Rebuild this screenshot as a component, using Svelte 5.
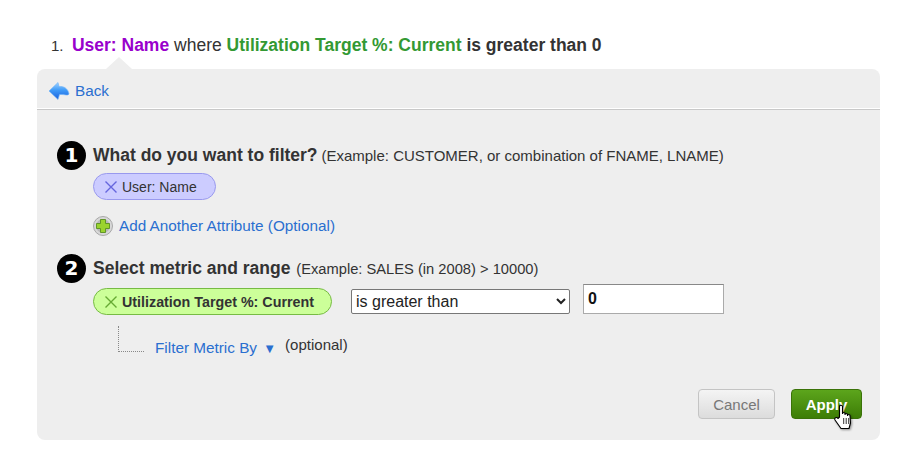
<script>
  const operators = ['is greater than', 'is less than', 'is equal to']
  let operator = operators[0]
  let threshold = '0'
</script>

<div class="page">
  <p class="rule">
    <span class="num">1.</span>
    <b class="attr">User: Name</b> where <b class="metric">Utilization Target %: Current</b> <b>is greater than 0</b>
  </p>

  <section class="panel">
    <span class="notch"></span>
    <div class="back">
      <svg class="back-icon" width="22" height="20" viewBox="0 0 22 20">
        <defs>
          <linearGradient id="arrow" x1="0" y1="0" x2="0" y2="1">
            <stop offset="0" stop-color="#9fd2ff" />
            <stop offset="0.45" stop-color="#3f9bf8" />
            <stop offset="1" stop-color="#1a5fdc" />
          </linearGradient>
        </defs>
        <path d="M1 10 L10 1.500 L11 5.500 C16 5 20 7.500 21 13 C20 15 17 13.500 14 13.500 L11.500 13.500 L10 18.500 Z" fill="url(#arrow)" stroke="#6db2f8" stroke-width="0.6" />
      </svg>
      <a href="#back">Back</a>
    </div>

    <div class="body">
      <div class="step first">
        <span class="badge">1</span>
        <div class="step-main">
          <h3>What do you want to filter? <small>(Example: CUSTOMER, or combination of FNAME, LNAME)</small></h3>
          <div class="pill attr-pill">
            <svg class="x" width="14" height="14" viewBox="0 0 14 14"><path d="M1.500 1.500 L12.500 12.500 M12.500 1.500 L1.500 12.500" /></svg>
            <span>User: Name</span>
          </div>
          <div class="add">
            <svg width="20" height="20" viewBox="0 0 20 20">
              <circle cx="10" cy="10" r="9.500" fill="#d8d8d8" stroke="#a8a8a8" />
              <circle cx="10" cy="10" r="7" fill="#b8b8b8" />
              <path d="M7.500 3.500 H12.500 V7.500 H16.500 V12.500 H12.500 V16.500 H7.500 V12.500 H3.500 V7.500 H7.500 Z" fill="#9ad32e" stroke="#4f8a14" stroke-width="0.8" />
            </svg>
            <a href="#add">Add Another Attribute (Optional)</a>
          </div>
        </div>
      </div>

      <div class="step second">
        <span class="badge">2</span>
        <div class="step-main">
          <h3>Select metric and range <small>(Example: SALES (in 2008) &gt; 10000)</small></h3>
          <div class="metric-row">
            <div class="pill metric-pill">
              <svg class="x" width="14" height="14" viewBox="0 0 14 14"><path d="M1.500 1.500 L12.500 12.500 M12.500 1.500 L1.500 12.500" /></svg>
              <span>Utilization Target %: Current</span>
            </div>
            <select bind:value={operator}>
              {#each operators as op}
                <option value={op}>{op}</option>
              {/each}
            </select>
            <input type="text" bind:value={threshold} />
          </div>
          <div class="filter-row">
            <span class="elbow"></span>
            <a href="#filter">Filter Metric By <span class="caret">▼</span></a>
            <span class="optional">(optional)</span>
          </div>
        </div>
      </div>

      <div class="actions">
        <button class="cancel">Cancel</button>
        <button class="apply">Apply</button>
        <svg class="cursor" width="19" height="26" viewBox="0 0 19 26">
          <path d="M5.500 13 L5.500 2.500 C5.500 0.800 8.500 0.800 8.500 2.500 L8.500 9.500 C8.500 8.200 11 8.200 11 9.500 L11 10.500 C11 9.200 13.500 9.200 13.500 10.500 L13.500 11.500 C13.500 10.200 16 10.200 16 11.500 L16.500 19 L15 24.500 L7 24.500 L1 16 C0 14 2.500 12.500 4 14.500 Z" fill="#fff" stroke="#000" stroke-width="1.100" stroke-linejoin="round" />
          <path d="M9.700 14 V20 M12.200 14 V20 M14.700 14 V20" stroke="#000" stroke-width="0.8" />
        </svg>
      </div>
    </div>
  </section>
</div>

<style>
  :global(body) {
    margin: 0;
    background: #fff;
  }
  .page {
    width: 918px;
    height: 473px;
    padding: 36px 38px 0 37px;
    box-sizing: border-box;
    font-family: "Liberation Sans", Arial, sans-serif;
    color: #333;
  }
  .rule {
    margin: 0 0 14px 14px;
    font-size: 17.500px;
    line-height: 19px;
  }
  .num {
    font-size: 15px;
    margin-right: 3.500px;
  }
  .attr {
    color: #9900cc;
  }
  .metric {
    color: #339933;
  }
  .panel {
    position: relative;
    height: 371px;
    background: #eee;
    border-radius: 8px;
  }
  .notch {
    position: absolute;
    left: 69px;
    top: -12px;
    border-left: 13px solid transparent;
    border-right: 13px solid transparent;
    border-bottom: 12px solid #eee;
  }
  a {
    color: #2a6fd0;
    text-decoration: none;
  }
  .back {
    height: 36px;
    display: flex;
    align-items: center;
    padding: 4px 0 0 11px;
    gap: 5px;
    border-bottom: 1px solid #c8c8c8;
    box-shadow: inset 0 -1px 0 #fff;
    font-size: 15.300px;
  }
  .body {
    padding: 0 18px 0 20px;
  }
  .step {
    display: flex;
    gap: 7px;
  }
  .first {
    padding-top: 31px;
  }
  .second {
    padding-top: 18px;
  }
  .badge {
    flex: none;
    width: 29px;
    height: 29px;
    border-radius: 50%;
    background: #000;
    color: #fff;
    font-family: "DejaVu Sans", sans-serif;
    font-size: 20px;
    font-weight: bold;
    line-height: 29px;
    text-align: center;
  }
  h3 {
    margin: 4px 0 0;
    font-size: 17.500px;
    line-height: 20px;
    font-weight: bold;
  }
  small {
    margin-left: -1px;
    font-size: 15px;
    font-weight: normal;
  }
  .second small {
    margin-left: 1px;
    font-size: 14.700px;
  }
  .pill {
    display: flex;
    align-items: center;
    gap: 4px;
    height: 27px;
    box-sizing: border-box;
    padding: 0 10px;
    border-radius: 14px;
    font-size: 14px;
  }
  .x {
    fill: none;
    stroke-width: 1.400;
  }
  .attr-pill {
    margin-top: 7px;
    width: 123px;
    background: #ccccff;
    border: 1px solid #9999ee;
  }
  .attr-pill .x {
    stroke: #6666dd;
  }
  .metric-pill {
    width: 239px;
    flex: none;
    background: #ccff99;
    border: 1px solid #77bb44;
    font-size: 14.300px;
    font-weight: bold;
  }
  .metric-pill .x {
    stroke: #66aa33;
  }
  .add {
    display: flex;
    align-items: center;
    gap: 6px;
    margin-top: 16px;
    font-size: 15.300px;
  }
  .metric-row {
    display: flex;
    align-items: flex-start;
    margin-top: 9px;
  }
  select {
    width: 219px;
    height: 25px;
    margin: 1px 0 0 19px;
    font: 16px "Liberation Sans", Arial, sans-serif;
    color: #222;
    background: #fff;
    border: 1px solid #777;
    border-radius: 2px;
  }
  input {
    width: 141px;
    height: 30px;
    margin: -4px 0 0 13px;
    box-sizing: border-box;
    padding: 0 4px;
    font: bold 16px "Liberation Sans", Arial, sans-serif;
    color: #111;
    background: #fff;
    border: 1px solid #aaa;
    border-top-color: #888;
  }
  .filter-row {
    display: flex;
    align-items: flex-start;
    margin: 11px 0 0 25px;
    font-size: 15.300px;
  }
  .elbow {
    flex: none;
    width: 25px;
    height: 25px;
    margin-right: 11px;
    border-left: 1px dotted #888;
    border-bottom: 1px dotted #888;
  }
  .filter-row a {
    margin-top: 13px;
  }
  .caret {
    font-size: 13px;
    margin-left: 2px;
  }
  .optional {
    margin: 10px 0 0 9px;
    font-size: 15px;
  }
  .actions {
    position: relative;
    display: flex;
    justify-content: flex-end;
    gap: 16px;
    margin-top: 32px;
  }
  button {
    width: 77px;
    height: 30px;
    border-radius: 4px;
    font: 15px "Liberation Sans", Arial, sans-serif;
  }
  .cancel {
    color: #777;
    background: linear-gradient(#f4f4f4, #dcdcdc);
    border: 1px solid #c4c4c4;
  }
  .apply {
    width: 71px;
    color: #fff;
    font-weight: bold;
    background: linear-gradient(#5ca51c, #3d7d06);
    border: 1px solid #3a7208;
  }
  .cursor {
    position: absolute;
    right: 9px;
    top: 15px;
    filter: drop-shadow(1px 1px 1px rgba(0, 0, 0, 0.4));
  }
</style>
